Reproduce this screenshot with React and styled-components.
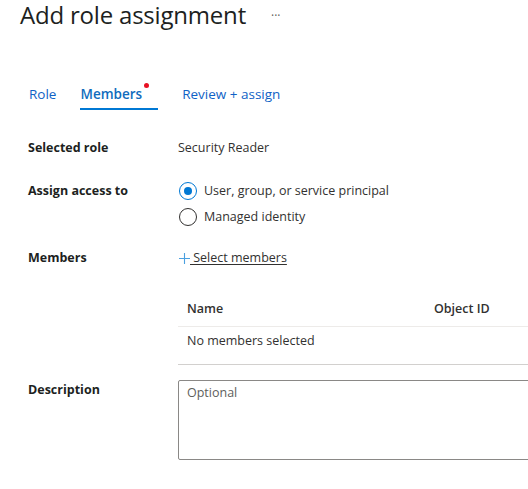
import React from "react";
import styled, { createGlobalStyle } from "styled-components";

const Global = createGlobalStyle`
  html, body { margin: 0; padding: 0; background: #fff; }
  body { font-family: "Open Sans", "Noto Sans", sans-serif; color: #323130; }
`;

const Page = styled.div`
  width: 528px;
  height: 489px;
  overflow: hidden;
  position: relative;
`;

const Header = styled.div`
  display: flex;
  align-items: center;
  padding: 0 0 0 20px;
  height: 30px;
`;

const Title = styled.h1`
  margin: 0;
  font-size: 24px;
  font-weight: 400;
  color: #201f1e;
  letter-spacing: -0.2px;
  line-height: 30px;
`;

const More = styled.span`
  margin-left: 25px;
  font-size: 12px;
  color: #605e5c;
`;

const Tabs = styled.div`
  display: flex;
  margin: 51px 0 0 29px;
`;

const Tab = styled.div`
  position: relative;
  padding-right: ${(p) => p.$pr}px;
  margin-right: ${(p) => p.$mr}px;
  font-size: 13.5px;
  font-weight: ${(p) => (p.$active ? 600 : 400)};
  color: ${(p) => (p.$active ? "#0f6cbd" : "#0f62c6")};
  line-height: 27px;
  height: 27px;
  border-bottom: 2px solid ${(p) => (p.$active ? "#0078d4" : "transparent")};
`;

const Dot = styled.span`
  position: absolute;
  right: 9px;
  top: 2px;
  width: 5px;
  height: 5px;
  border-radius: 50%;
  background: #e81123;
`;

const Form = styled.div`
  margin-top: 28px;
  padding-left: 28px;
  display: flex;
  flex-direction: column;
`;

const Row = styled.div`
  display: grid;
  grid-template-columns: 150px 1fr;
  margin-top: ${(p) => p.$mt || 0}px;
  margin-bottom: ${(p) => p.$mb || 0}px;
`;

const Label = styled.div`
  font-size: 12.5px;
  font-weight: 700;
  color: #201f1e;
  line-height: 20px;
`;

const Value = styled.div`
  font-size: 12.5px;
  color: #323130;
  line-height: 20px;
`;

const RadioGroup = styled.div`
  display: flex;
  flex-direction: column;
  gap: 6px;
`;

const RadioRow = styled.label`
  display: flex;
  align-items: center;
  gap: 7px;
  font-size: 12.5px;
  color: #323130;
  line-height: 20px;
`;

const Circle = styled.span`
  width: 16px;
  height: 16px;
  border-radius: 50%;
  border: 1px solid ${(p) => (p.$checked ? "#0078d4" : "#323130")};
  display: flex;
  align-items: center;
  justify-content: center;
  margin-left: 1px;
  &::after {
    content: "";
    width: 8px;
    height: 8px;
    border-radius: 50%;
    background: ${(p) => (p.$checked ? "#0078d4" : "transparent")};
  }
`;

const AddLink = styled.div`
  display: flex;
  align-items: center;
  font-size: 12.5px;
  line-height: 20px;
  color: #323130;
  margin-left: 1px;
`;

const LinkText = styled.span`
  text-decoration: underline;
  text-underline-offset: 2px;
  color: #323130;
  text-decoration-color: #323130;
  white-space: pre;
`;

const Table = styled.div`
  margin-left: 150px;
  margin-top: 22px;
  margin-right: -20px;
`;

const THead = styled.div`
  box-sizing: border-box;
  display: grid;
  grid-template-columns: 247px 1fr;
  padding-left: 9px;
  height: 37px;
  align-items: center;
  border-bottom: 1px solid #edebe9;
  font-size: 12.5px;
  font-weight: 600;
  color: #323130;
`;

const TRow = styled.div`
  box-sizing: border-box;
  height: 38px;
  padding: 4px 0 0 9px;
  line-height: 20px;
  border-bottom: 1px solid #d2d0ce;
  font-size: 12.5px;
  color: #323130;
`;

const TextArea = styled.div`
  box-sizing: border-box;
  width: 370px;
  height: 80px;
  border: 1px solid #8a8886;
  border-radius: 2px;
  padding: 2px 8px;
  font-size: 12.5px;
  color: #605e5c;
  line-height: 20px;
`;

export default function App() {
  return (
    <Page>
      <Global />
      <Header>
        <Title>Add role assignment</Title>
        <More>···</More>
      </Header>
      <Tabs>
        <Tab $pr={24} $mr={0}>Role</Tab>
        <Tab $active $pr={16} $mr={24}>
          Members
          <Dot />
        </Tab>
        <Tab $pr={4} $mr={0}>Review + assign</Tab>
      </Tabs>
      <Form>
        <Row $mb={23}>
          <Label>Selected role</Label>
          <Value>Security Reader</Value>
        </Row>
        <Row $mb={21}>
          <Label>Assign access to</Label>
          <RadioGroup>
            <RadioRow>
              <Circle $checked />
              User, group, or service principal
            </RadioRow>
            <RadioRow>
              <Circle />
              Managed identity
            </RadioRow>
          </RadioGroup>
        </Row>
        <Row>
          <Label>Members</Label>
          <AddLink>
            <svg width="11" height="11" viewBox="0 0 11 11">
              <path d="M5.5 0v11M0 5.5h11" stroke="#0078d4" strokeWidth="1.1" opacity="0.7" />
            </svg>
            <LinkText>{" Select members"}</LinkText>
          </AddLink>
        </Row>
        <Table>
          <THead>
            <span>Name</span>
            <span>Object ID</span>
          </THead>
          <TRow>No members selected</TRow>
        </Table>
        <Row $mt={15}>
          <Label>Description</Label>
          <TextArea>Optional</TextArea>
        </Row>
      </Form>
    </Page>
  );
}
